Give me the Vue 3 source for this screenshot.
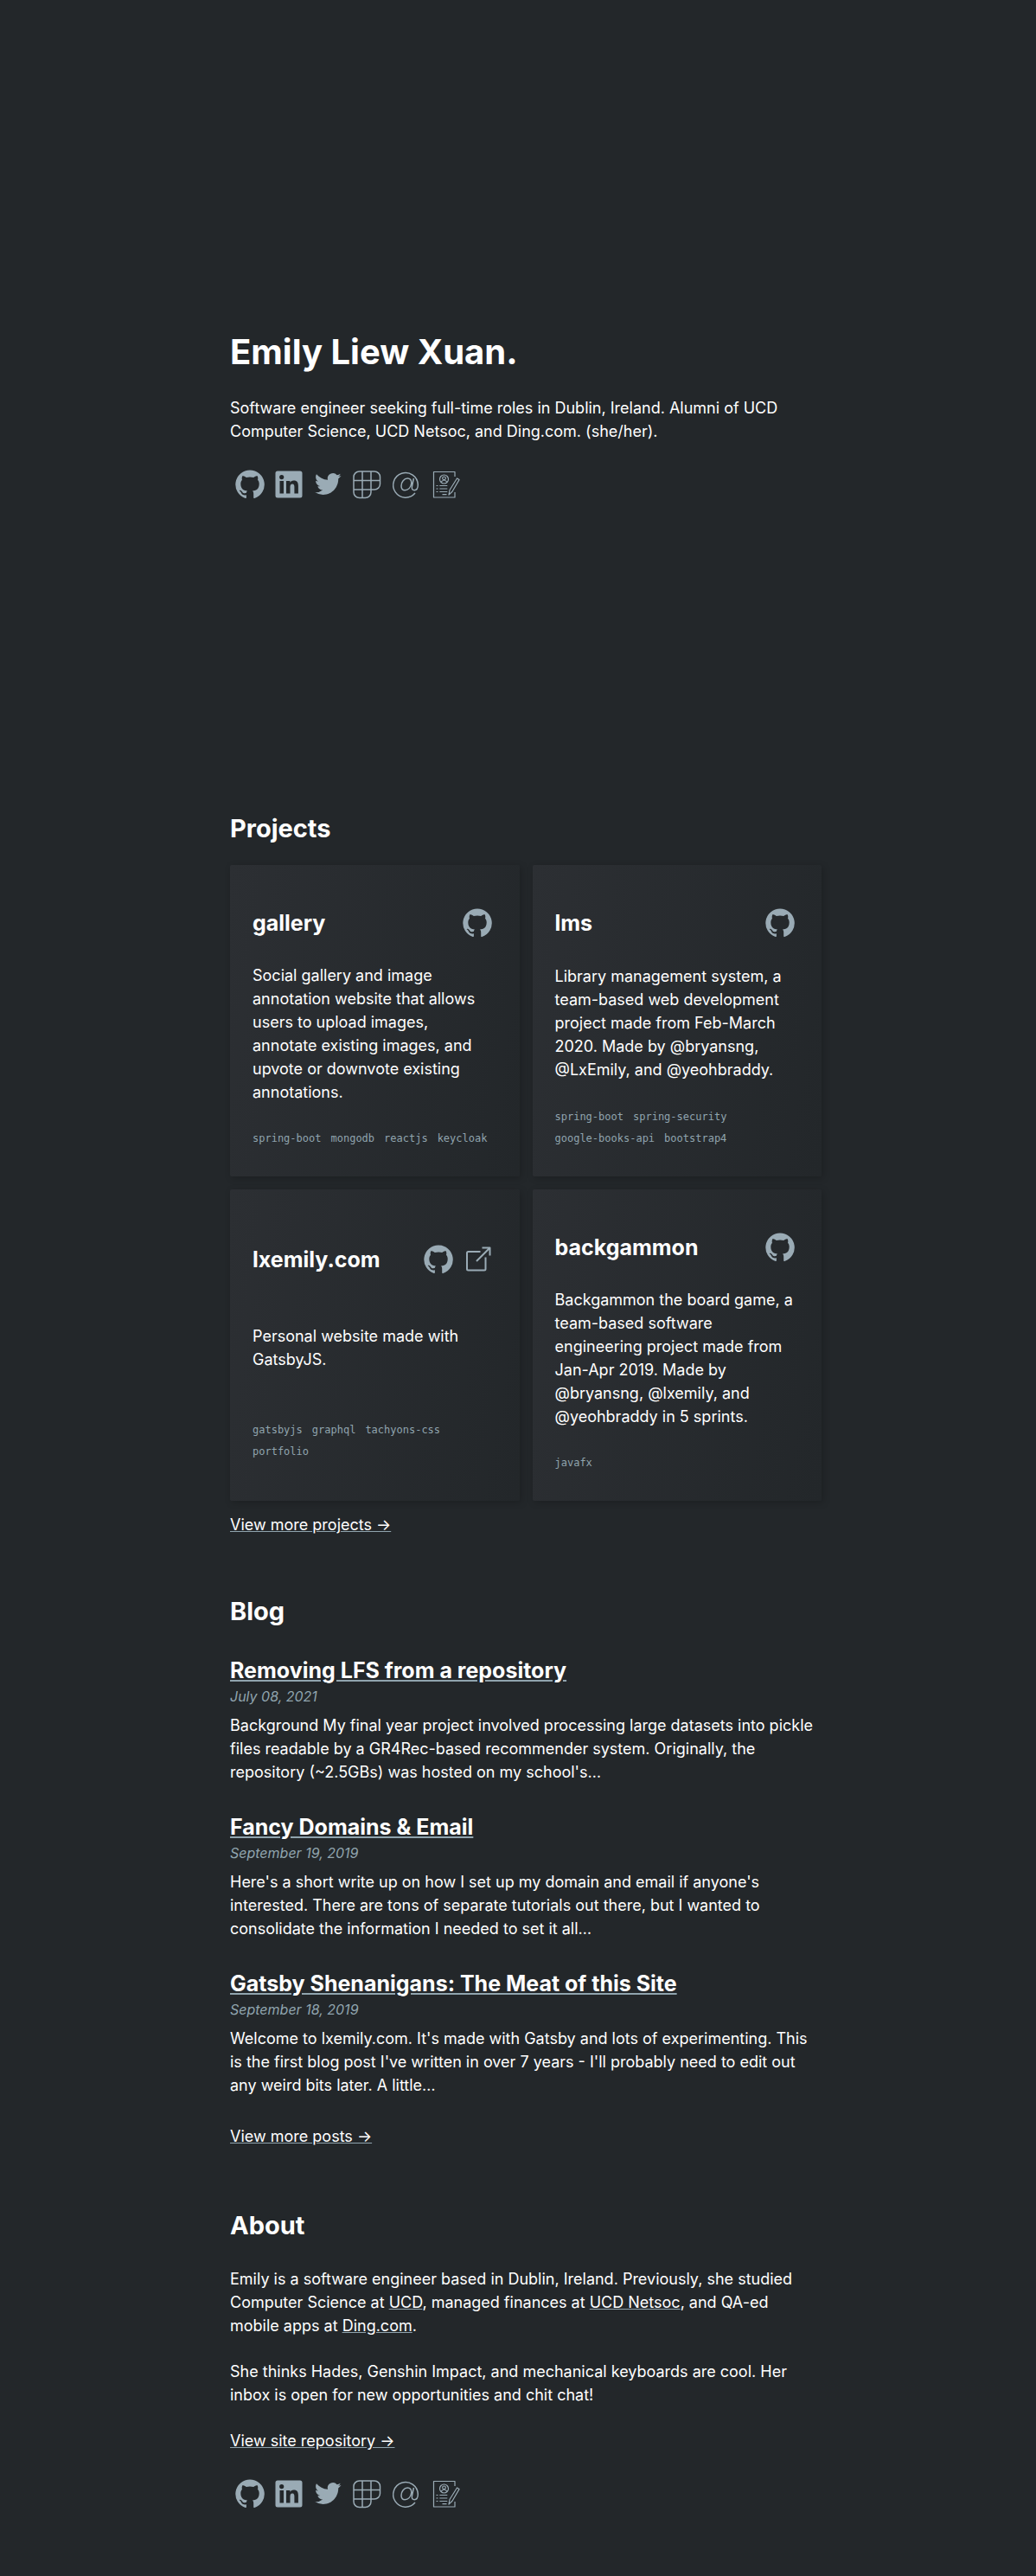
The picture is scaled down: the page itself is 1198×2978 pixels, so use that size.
<script setup>
const ICONS = {
  github: {
    fill: 'M18 1.4A16.8 16.8 0 0 0 12.7 34.1c.8.1 1.2-.4 1.2-.8v-3.1c-4.7 1-5.700-2-5.700-2-.8-2-1.900-2.500-1.900-2.500-1.500-1 .1-1 .1-1 1.700.1 2.600 1.700 2.600 1.700 1.500 2.600 3.900 1.800 4.900 1.400.2-1.100.6-1.800 1.100-2.200-3.700-.4-7.700-1.900-7.700-8.300 0-1.800.7-3.300 1.700-4.500-.2-.4-.7-2.100.2-4.400 0 0 1.400-.5 4.600 1.700a16 16 0 0 1 8.400 0c3.200-2.200 4.600-1.700 4.600-1.700.9 2.300.3 4 .2 4.400 1.100 1.200 1.700 2.700 1.700 4.500 0 6.500-3.900 7.900-7.700 8.300.6.5 1.200 1.600 1.200 3.100v4.600c0 .4.3 1 1.200.8A16.800 16.800 0 0 0 18 1.400z'
  },
  linkedin: {
    fill: 'M5 2.5h26A2.5 2.5 0 0 1 33.5 5v26a2.5 2.5 0 0 1-2.5 2.5H5A2.5 2.5 0 0 1 2.5 31V5A2.500 2.500 0 0 1 5 2.500zM7.500 14v14.500h4.500V14zM9.700 7a2.600 2.600 0 1 0 0 5.200 2.600 2.600 0 0 0 0-5.200zM15 14v14.500h4.500v-7.500c0-2 .6-3.600 2.600-3.600s2.300 1.800 2.300 3.700v7.400h4.500v-8.300c0-4-1-6.600-5.300-6.600-2.100 0-3.600 1.100-4.200 2.300V14z'
  },
  twitter: {
    fill: 'M33.500 8.100c-1.100.5-2.300.8-3.600 1 1.300-.8 2.300-2 2.700-3.400-1.200.7-2.500 1.200-3.900 1.500a6.200 6.200 0 0 0-10.700 5.600C12.800 12.500 8.200 10.100 5 6.300c-1.700 2.900-.8 6.500 1.900 8.300-1 0-2-.3-2.800-.8 0 3.100 2.100 5.700 5 6.300-.9.2-1.900.3-2.800.1.800 2.500 3.100 4.300 5.800 4.300A12.500 12.500 0 0 1 3 27.100a17.600 17.600 0 0 0 9.500 2.800c11.500 0 18-9.700 17.700-18.400 1.300-.9 2.400-2.100 3.300-3.400z'
  },
  polywork: {
    stroke: 'M9.500 3h17.500a6.500 6.500 0 0 1 6.500 6.500v8a6.500 6.500 0 0 1-6.500 6.500h-4v3a6.500 6.500 0 0 1-6.500 6.500h-7A6.500 6.500 0 0 1 3 27V9.500A6.500 6.500 0 0 1 9.500 3zM13 3v30.500M23 3v21M3 13.500h30.500M3 24h20'
  },
  email: {
    stroke: 'M29 28A14.300 14.300 0 1 1 32.300 18.300c0 4-1.600 6.400-4.100 6.400-2.300 0-3.300-1.600-2.800-4.200l2-9.500M24.800 16.500c0-3.700-1.800-5.500-4.500-5.500-4 0-7.300 4.300-7.300 8.700 0 3.100 1.500 5 4.200 5 3.700 0 6.800-3.200 7.600-8.200z'
  },
  resume: {
    stroke: 'M30 9V3.500H5.500v29.500H30V27M23 30l1-5.500 8.500-13.500 2.500 1.600-8 13.700zM17.500 7a5 5 0 1 0 0 10 5 5 0 0 0 0-10zM17.500 9a1.800 1.800 0 1 0 0 3.600 1.800 1.800 0 0 0 0-3.600zM14.200 15.500c1-3 5.600-3 6.600 0M12.300 19.500h9M12.300 23h9M12.300 26.500h9M8.500 19.500h2M8.500 23h2M8.500 26.500h2M15.500 29.700h5'
  },
  external: {
    stroke: 'M21.500 9H7.500A1.500 1.500 0 0 0 6 10.500V29a1.500 1.500 0 0 0 1.500 1.500H26a1.500 1.500 0 0 0 1.500-1.500V15.500M17 20 32 5M23.500 4.500H32.500v9'
  }
}

const socials = [
  { icon: 'github', label: 'GitHub' },
  { icon: 'linkedin', label: 'LinkedIn' },
  { icon: 'twitter', label: 'Twitter' },
  { icon: 'polywork', label: 'Polywork' },
  { icon: 'email', label: 'Email' },
  { icon: 'resume', label: 'Resume' }
]

const github = { icon: 'github', label: 'Source on GitHub' }
const external = { icon: 'external', label: 'Visit site' }

const projects = [
  {
    name: 'gallery',
    links: [github],
    text: 'Social gallery and image annotation website that allows users to upload images, annotate existing images, and upvote or downvote existing annotations.',
    tags: ['spring-boot', 'mongodb', 'reactjs', 'keycloak']
  },
  {
    name: 'lms',
    links: [github],
    text: 'Library management system, a team-based web development project made from Feb-March 2020. Made by @bryansng, @LxEmily, and @yeohbraddy.',
    tags: ['spring-boot', 'spring-security', 'google-books-api', 'bootstrap4']
  },
  {
    name: 'lxemily.com',
    links: [github, external],
    text: 'Personal website made with GatsbyJS.',
    tags: ['gatsbyjs', 'graphql', 'tachyons-css', 'portfolio']
  },
  {
    name: 'backgammon',
    links: [github],
    text: 'Backgammon the board game, a team-based software engineering project made from Jan-Apr 2019. Made by @bryansng, @lxemily, and @yeohbraddy in 5 sprints.',
    tags: ['javafx']
  }
]

const posts = [
  {
    title: 'Removing LFS from a repository',
    date: 'July 08, 2021',
    text: "Background My final year project involved processing large datasets into pickle files readable by a GR4Rec-based recommender system. Originally, the repository (~2.5GBs) was hosted on my school's…"
  },
  {
    title: 'Fancy Domains & Email',
    date: 'September 19, 2019',
    text: "Here's a short write up on how I set up my domain and email if anyone's interested. There are tons of separate tutorials out there, but I wanted to consolidate the information I needed to set it all…"
  },
  {
    title: 'Gatsby Shenanigans: The Meat of this Site',
    date: 'September 18, 2019',
    text: "Welcome to lxemily.com. It's made with Gatsby and lots of experimenting. This is the first blog post I've written in over 7 years - I'll probably need to edit out any weird bits later. A little…"
  }
]
</script>

<template>
  <div class="page">
    <main class="column">
      <header class="hero">
        <h1>Emily Liew Xuan.</h1>
        <p>
          Software engineer seeking full-time roles in Dublin, Ireland. Alumni of UCD Computer
          Science, UCD Netsoc, and Ding.com. (she/her).
        </p>
        <nav class="icons" aria-label="Social links">
          <a v-for="s in socials" :key="s.icon" class="icon" href="#" :aria-label="s.label">
            <svg viewBox="0 0 36 36" aria-hidden="true">
              <path v-if="ICONS[s.icon].fill" class="solid" :d="ICONS[s.icon].fill" />
              <path v-else class="line" :class="s.icon" :d="ICONS[s.icon].stroke" />
            </svg>
          </a>
        </nav>
      </header>

      <section class="projects">
        <h2>Projects</h2>
        <div class="grid">
          <article v-for="p in projects" :key="p.name" class="card">
            <div class="card-head">
              <h3>{{ p.name }}</h3>
              <div class="icons">
                <a v-for="l in p.links" :key="l.icon" class="icon" href="#" :aria-label="l.label">
                  <svg viewBox="0 0 36 36" aria-hidden="true">
                    <path v-if="ICONS[l.icon].fill" class="solid" :d="ICONS[l.icon].fill" />
                    <path v-else class="line" :class="l.icon" :d="ICONS[l.icon].stroke" />
                  </svg>
                </a>
              </div>
            </div>
            <p>{{ p.text }}</p>
            <ul class="tags">
              <li v-for="t in p.tags" :key="t">{{ t }}</li>
            </ul>
          </article>
        </div>
        <a class="link" href="#">View more projects →</a>
      </section>

      <section class="blog">
        <h2>Blog</h2>
        <article v-for="post in posts" :key="post.title" class="post">
          <h3><a class="link" href="#">{{ post.title }}</a></h3>
          <time>{{ post.date }}</time>
          <p>{{ post.text }}</p>
        </article>
        <a class="link" href="#">View more posts →</a>
      </section>

      <section class="about">
        <h2>About</h2>
        <p>
          Emily is a software engineer based in Dublin, Ireland. Previously, she studied Computer
          Science at <a class="link" href="#">UCD</a>, managed finances at
          <a class="link" href="#">UCD Netsoc</a>, and QA-ed mobile apps at
          <a class="link" href="#">Ding.com</a>.
        </p>
        <p>
          She thinks Hades, Genshin Impact, and mechanical keyboards are cool. Her inbox is open
          for new opportunities and chit chat!
        </p>
        <a class="link" href="#">View site repository →</a>
      </section>

      <footer class="icons">
        <a v-for="s in socials" :key="s.icon" class="icon" href="#" :aria-label="s.label">
          <svg viewBox="0 0 36 36" aria-hidden="true">
            <path v-if="ICONS[s.icon].fill" class="solid" :d="ICONS[s.icon].fill" />
            <path v-else class="line" :class="s.icon" :d="ICONS[s.icon].stroke" />
          </svg>
        </a>
      </footer>
    </main>
  </div>
</template>

<style>
body {
  margin: 0;
  background: #23272a;
}
</style>

<style scoped>
.page {
  color: #fff;
  font-family: Inter, 'Open Sans', sans-serif;
  font-size: 18px;
  line-height: 27px;
}

.column {
  box-sizing: border-box;
  max-width: 702px;
  margin: 0 auto;
  padding: 382px 0 77px 18px;
}

h1,
h2,
h3,
p,
ul {
  margin: 0;
}

h1 {
  font-size: 40px;
  line-height: 50px;
}

h2 {
  font-size: 29px;
  line-height: 36px;
}

h3 {
  font-size: 25px;
  line-height: 30px;
}

.hero p {
  margin: 26px 0 30px;
}

.icons {
  display: flex;
}

.icon {
  display: flex;
  justify-content: center;
  width: 45px;
}

.icon svg {
  width: 36px;
  height: 36px;
}

.solid {
  fill: #9aabb5;
  fill-rule: evenodd;
}

.line {
  fill: none;
  stroke: #9aabb5;
  stroke-width: 1.5;
  stroke-linejoin: round;
}

.line.external {
  stroke-width: 2;
}

.line.resume {
  stroke-width: 1.2;
}

.link {
  color: #fff;
  text-decoration: underline;
  text-decoration-color: #90a4ae;
}

.projects {
  margin-top: 362px;
}

.grid {
  display: grid;
  grid-template-columns: 1fr 1fr;
  gap: 15px;
  margin: 24px 0 14px;
}

.card {
  box-sizing: border-box;
  display: flex;
  flex-direction: column;
  justify-content: space-around;
  min-height: 360px;
  padding: 48px 26px 30px;
  border-radius: 2px;
  background: linear-gradient(100deg, #2c2f33, #23272a);
  box-shadow: 2px 2px 8px rgba(0, 0, 0, 0.2);
}

.card-head {
  display: flex;
  align-items: center;
  justify-content: space-between;
  margin-bottom: 28px;
}

.card p {
  margin-bottom: 27px;
}

.tags {
  display: flex;
  flex-wrap: wrap;
  column-gap: 11px;
  padding: 0;
  list-style: none;
  color: #90a4ae;
  font-family: 'DejaVu Sans Mono', 'Liberation Mono', monospace;
  font-size: 12px;
  line-height: 25px;
}

.blog {
  margin-top: 69px;
}

.blog h2 {
  margin-bottom: 35px;
}

.post {
  margin-bottom: 35px;
}

.post:last-of-type {
  margin-bottom: 32px;
}

.post time {
  display: block;
  color: #90a4ae;
  font-size: 16px;
  font-style: italic;
  line-height: 30px;
  margin-bottom: 5px;
}

.about {
  margin-top: 72px;
}

.about h2 {
  margin-bottom: 30px;
}

.about p {
  margin-bottom: 26px;
}

footer {
  margin-top: 30px;
}
</style>
